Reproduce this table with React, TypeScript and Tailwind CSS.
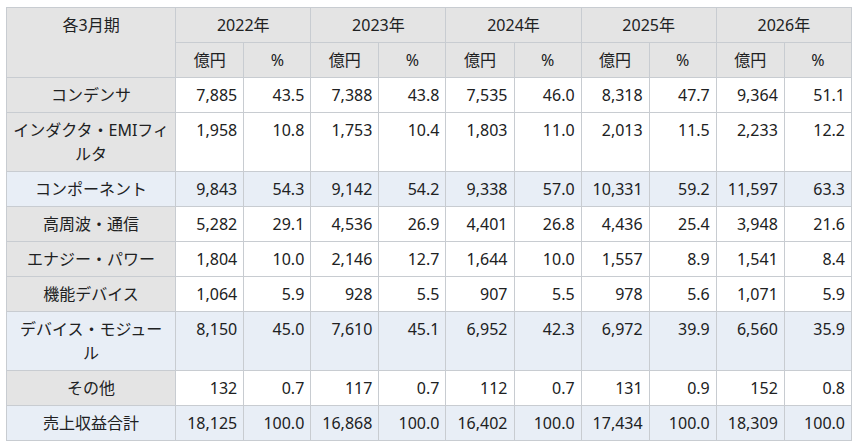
import { Fragment } from "react";

const years = ["2022年", "2023年", "2024年", "2025年", "2026年"];

type Row = { label: string; values: string[]; total?: boolean };

const rows: Row[] = [
  { label: "コンデンサ", values: ["7,885", "43.5", "7,388", "43.8", "7,535", "46.0", "8,318", "47.7", "9,364", "51.1"] },
  { label: "インダクタ・EMIフィルタ", values: ["1,958", "10.8", "1,753", "10.4", "1,803", "11.0", "2,013", "11.5", "2,233", "12.2"] },
  { label: "コンポーネント", total: true, values: ["9,843", "54.3", "9,142", "54.2", "9,338", "57.0", "10,331", "59.2", "11,597", "63.3"] },
  { label: "高周波・通信", values: ["5,282", "29.1", "4,536", "26.9", "4,401", "26.8", "4,436", "25.4", "3,948", "21.6"] },
  { label: "エナジー・パワー", values: ["1,804", "10.0", "2,146", "12.7", "1,644", "10.0", "1,557", "8.9", "1,541", "8.4"] },
  { label: "機能デバイス", values: ["1,064", "5.9", "928", "5.5", "907", "5.5", "978", "5.6", "1,071", "5.9"] },
  { label: "デバイス・モジュール", total: true, values: ["8,150", "45.0", "7,610", "45.1", "6,952", "42.3", "6,972", "39.9", "6,560", "35.9"] },
  { label: "その他", values: ["132", "0.7", "117", "0.7", "112", "0.7", "131", "0.9", "152", "0.8"] },
  { label: "売上収益合計", total: true, values: ["18,125", "100.0", "16,868", "100.0", "16,402", "100.0", "17,434", "100.0", "18,309", "100.0"] },
];

export default function App() {
  return (
    <div
      className="bg-white w-[854px] h-[447px] pt-[7px] pl-[6px] text-[#202122] text-[16px] leading-6"
      style={{ fontFamily: '"Noto Sans", "Noto Sans CJK JP", sans-serif' }}
    >
      <table className="table-fixed border-collapse w-[846px]">
        <colgroup>
          <col className="w-[169px]" />
          {years.map((y) => (
            <Fragment key={y}>
              <col className="w-[68px]" />
              <col className="w-[67px]" />
            </Fragment>
          ))}
        </colgroup>
        <thead>
          <tr>
            <th
              rowSpan={2}
              className="border border-[#c8ccd1] bg-[#e4e4e4] font-normal text-center align-top px-[6px] py-[5px]"
            >
              各3月期
            </th>
            {years.map((y) => (
              <th
                key={y}
                colSpan={2}
                className="border border-[#c8ccd1] bg-[#e4e4e4] font-normal text-center px-[6px] py-[5px]"
              >
                {y}
              </th>
            ))}
          </tr>
          <tr>
            {years.map((y) => (
              <Fragment key={y}>
                <th className="border border-[#c8ccd1] bg-[#e4e4e4] font-normal text-center px-[6px] py-[5px]">
                  億円
                </th>
                <th className="border border-[#c8ccd1] bg-[#e4e4e4] font-normal text-center px-[6px] py-[5px]">
                  %
                </th>
              </Fragment>
            ))}
          </tr>
        </thead>
        <tbody>
          {rows.map((r) => (
            <tr key={r.label} className={r.total ? "bg-[#e8eef6]" : "bg-white"}>
              <th
                className={
                  "border border-[#c8ccd1] font-normal text-center align-top px-[6px] py-[5px] " +
                  (r.total ? "bg-[#e8eef6]" : "bg-[#e4e4e4]")
                }
              >
                {r.label}
              </th>
              {r.values.map((v, i) => (
                <td key={i} className="border border-[#c8ccd1] text-right align-top px-[6px] py-[5px]">
                  {v}
                </td>
              ))}
            </tr>
          ))}
        </tbody>
      </table>
    </div>
  );
}
